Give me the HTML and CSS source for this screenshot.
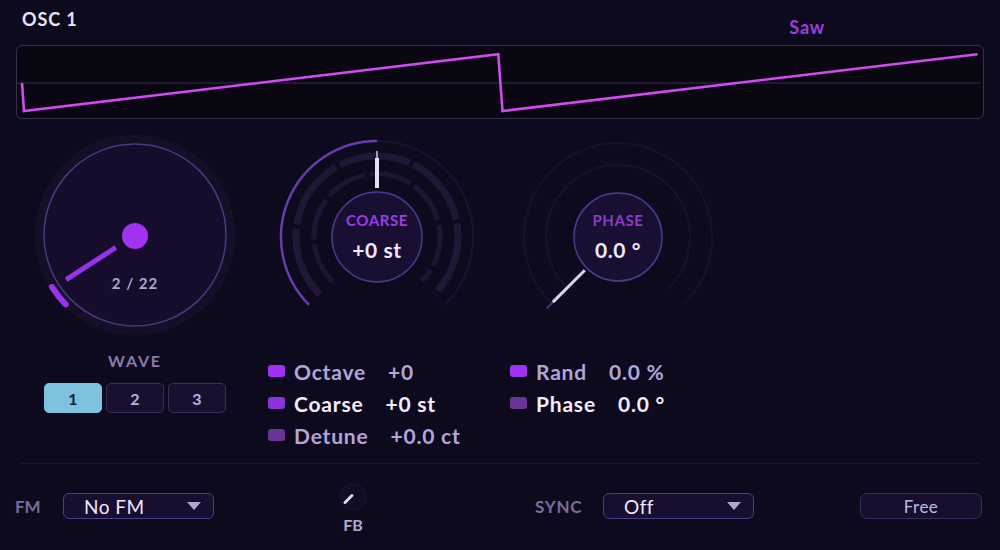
FILE: index.html
```html
<!DOCTYPE html>
<html lang="en">
<head>
<meta charset="utf-8">
<title>OSC 1</title>
<link rel="stylesheet" href="styles.css">
</head>
<body>
<div class="app">
  <header class="head">
    <span class="title">OSC 1</span>
    <span class="wave-name">Saw</span>
  </header>

  <div class="scope">
    <svg viewBox="0 0 966 72" preserveAspectRatio="none">
      <line x1="0" y1="37" x2="963" y2="37" class="midline"/>
      <polyline class="saw" points="5,37 7,65 481.3,8.3 485.5,65 960.5,8.3"/>
    </svg>
  </div>

  <section class="main">
    <div class="col col-wave">
      <div class="knob">
        <svg viewBox="0 0 200 204" width="200" height="204">
          <circle cx="100" cy="100" r="96" class="glow"/>
          <circle cx="100" cy="100" r="91" class="wave-face"/>
          <path d="M30.7 169.3 A98 98 0 0 1 16.9 151.9" class="wave-arc"/>
          <line x1="80.7" y1="112.5" x2="31.2" y2="144.7" class="wave-ptr"/>
          <circle cx="100" cy="101" r="13" class="wave-dot"/>
        </svg>
        <span class="wave-count">2 / 22</span>
      </div>
      <div class="wave-label">WAVE</div>
      <div class="wave-btns">
        <button class="wbtn active">1</button>
        <button class="wbtn">2</button>
        <button class="wbtn">3</button>
      </div>
    </div>

    <div class="col col-coarse">
      <div class="knob">
        <svg viewBox="0 0 200 204" width="200" height="204">
          <path d="M32.1 169.9 A96 96 0 0 1 100 6" class="arc-on"/>
          <path d="M100 6 A96 96 0 0 1 167.9 169.9" class="arc-off"/>
          <path d="M42.7 159.3 A81 81 0 1 1 157.3 159.3" class="ring-a"/>
          <path d="M55.5 146.5 A63 63 0 1 1 144.5 146.5" class="ring-b"/>
          <line x1="100" y1="16" x2="100" y2="23" class="ptr-thin"/>
          <line x1="100" y1="23" x2="100" y2="53" class="ptr-bar"/>
          <circle cx="100" cy="102" r="45" class="inner"/>
        </svg>
        <span class="k-name coarse">COARSE</span>
        <span class="k-val">+0 st</span>
      </div>
      <ul class="params">
        <li><span class="sq c1"></span><span class="lbl">Octave</span><span class="val">+0</span></li>
        <li class="hi"><span class="sq c2"></span><span class="lbl">Coarse</span><span class="val">+0 st</span></li>
        <li><span class="sq c3"></span><span class="lbl">Detune</span><span class="val">+0.0 ct</span></li>
      </ul>
    </div>

    <div class="col col-phase">
      <div class="knob">
        <svg viewBox="0 0 200 204" width="200" height="204">
          <path d="M33.5 168.5 A94 94 0 1 1 166.5 168.5" class="ring-faint"/>
          <path d="M49.1 152.9 A72 72 0 1 1 150.9 152.9" class="ring-faint"/>
          <line x1="34.9" y1="167.1" x2="28.6" y2="173.4" class="ph-tail"/>
          <line x1="66.8" y1="135.2" x2="34.9" y2="167.1" class="ph-ptr"/>
          <circle cx="100" cy="102" r="44" class="inner"/>
        </svg>
        <span class="k-name phase">PHASE</span>
        <span class="k-val">0.0 °</span>
      </div>
      <ul class="params">
        <li><span class="sq c1"></span><span class="lbl">Rand</span><span class="val">0.0 %</span></li>
        <li class="hi"><span class="sq c3"></span><span class="lbl">Phase</span><span class="val">0.0 °</span></li>
      </ul>
    </div>
  </section>

  <div class="sep"></div>

  <footer class="bottom">
    <span class="b-label fm">FM</span>
    <div class="dropdown fm-dd"><span>No FM</span><i class="tri"></i></div>
    <div class="fb">
      <svg viewBox="0 0 30 28" width="30" height="28">
        <circle cx="15.5" cy="14" r="13" class="fb-face"/>
        <line x1="7" y1="19.5" x2="14" y2="12.5" class="fb-ptr"/>
      </svg>
      <span class="fb-label">FB</span>
    </div>
    <span class="b-label sync">SYNC</span>
    <div class="dropdown sync-dd"><span>Off</span><i class="tri"></i></div>
    <button class="free">Free</button>
  </footer>
</div>
</body>
</html>
```

FILE: styles.css
```css
* { box-sizing: border-box; }

body {
  margin: 0;
  background: #0e0a1d;
  font-family: Lato, "Open Sans", "Noto Sans", sans-serif;
  color: #ebe3f8;
}

.app {
  width: 1000px;
  height: 550px;
  overflow: hidden;
}

/* header */
.head {
  display: flex;
  justify-content: space-between;
  height: 45px;
  padding-left: 22px;
}
.title {
  margin-top: 10px;
  font-size: 18px;
  line-height: 18px;
  font-weight: 700;
  letter-spacing: 0.9px;
  color: #ebe3f8;
}
.wave-name {
  margin-top: 18px;
  margin-right: 175px;
  font-size: 18px;
  line-height: 18px;
  font-weight: 700;
  letter-spacing: 0.8px;
  color: #9f3de3;
}

/* scope */
.scope {
  margin-left: 16px;
  width: 968px;
  height: 74px;
  border: 1px solid #36314a;
  border-radius: 6px;
  background: #0a0713;
}
.scope svg { display: block; width: 100%; height: 100%; }
.midline { stroke: #27223a; stroke-width: 1.5; }
.saw { fill: none; stroke: #d24bf0; stroke-width: 2.6; stroke-linejoin: miter; }

/* main */
.main {
  display: flex;
  height: 328px;
  margin-top: 16px;
  padding-left: 35px;
}
.col-wave { width: 200px; }
.col-coarse { width: 242px; margin-left: 33px; }
.col-coarse .knob { margin-left: 9px; }
.col-phase .knob { margin-left: 8px; }

.knob {
  position: relative;
  width: 200px;
  height: 204px;
}
.knob svg { display: block; }

.glow { fill: none; stroke: #140e27; stroke-width: 9; }
.wave-face { fill: #160d2d; stroke: #4a3a84; stroke-width: 1.5; }
.wave-arc { fill: none; stroke: #9a32ea; stroke-width: 6; stroke-linecap: round; }
.wave-ptr { stroke: #9a32ea; stroke-width: 5; }
.wave-dot { fill: #a232f2; }

.wave-count {
  position: absolute;
  left: 0;
  top: 141px;
  width: 100%;
  text-align: center;
  font-size: 15px;
  line-height: 15px;
  font-weight: 700;
  letter-spacing: 1px;
  color: #b2a5c8;
}

.arc-on { fill: none; stroke: #6a3ab0; stroke-width: 2.5; }
.arc-off { fill: none; stroke: #19132f; stroke-width: 2; }
.ring-a { fill: none; stroke: #1e1836; stroke-width: 7; stroke-dasharray: 72 4; }
.ring-b { fill: none; stroke: #1c1633; stroke-width: 5; stroke-dasharray: 42 5; }
.ptr-thin { stroke: #cfc6e4; stroke-width: 1.5; }
.ptr-bar { stroke: #e8e0f5; stroke-width: 4; }
.inner { fill: #190f33; stroke: #4a3a8a; stroke-width: 1.5; }
.ring-faint { fill: none; stroke: #17112b; stroke-width: 2; }
.ph-ptr { stroke: #ddd3ee; stroke-width: 3; }
.ph-tail { stroke: #4c3688; stroke-width: 2; }

.k-name {
  position: absolute;
  left: 0;
  top: 78px;
  width: 100%;
  text-align: center;
  font-size: 15px;
  line-height: 15px;
  font-weight: 700;
  letter-spacing: 0.6px;
}
.k-name.coarse { color: #9c3ee0; }
.k-name.phase { color: #8a3cc4; }
.k-val {
  position: absolute;
  left: 0;
  top: 105px;
  width: 100%;
  text-align: center;
  font-size: 21px;
  line-height: 20px;
  font-weight: 700;
  letter-spacing: 0.6px;
  color: #efe8fa;
}

/* wave selector */
.wave-label {
  margin-top: 12px;
  text-align: center;
  font-size: 16px;
  line-height: 20px;
  font-weight: 700;
  letter-spacing: 1.8px;
  color: #8a7aa8;
}
.wave-btns {
  display: flex;
  justify-content: center;
  gap: 4px;
  margin-top: 12px;
}
.wbtn {
  width: 58px;
  height: 30px;
  padding: 0;
  border: 1.5px solid #3a2c5c;
  border-radius: 5px;
  background: #190f2f;
  font-family: inherit;
  font-size: 16px;
  font-weight: 700;
  color: #bfb0e0;
}
.wbtn.active {
  background: #7dc3df;
  border-color: #7dc3df;
  color: #1a1d3a;
}

/* params */
.params {
  list-style: none;
  margin: 16px 0 0;
  padding: 0;
}
.params li {
  display: flex;
  align-items: center;
  height: 32px;
  font-size: 21px;
  font-weight: 700;
  letter-spacing: 0.8px;
  color: #b4a4dc;
}
.params li.hi { color: #f2ecff; }
.sq {
  width: 17px;
  height: 12px;
  border-radius: 3px;
  margin-right: 9px;
}
.sq.c1 { background: #a030f4; }
.sq.c2 { background: #8c34d8; }
.sq.c3 { background: #6a3496; }
.val { margin-left: 22px; }

/* separator */
.sep {
  height: 1px;
  margin: 0 20px;
  background: #1d1830;
}

/* bottom */
.bottom {
  display: flex;
  align-items: flex-start;
  padding-top: 29px;
}
.b-label {
  font-size: 17px;
  line-height: 27px;
  font-weight: 700;
  color: #7b6c9a;
}
.b-label.fm { width: 48px; margin-left: 15px; }
.b-label.sync { width: 68px; margin-left: 167px; letter-spacing: 0.7px; }

.dropdown {
  display: flex;
  align-items: center;
  justify-content: space-between;
  width: 151px;
  height: 26px;
  padding: 0 12px 0 20px;
  border: 1.5px solid #4c3c8a;
  border-radius: 6px;
  background: #170e30;
  font-size: 19px;
  color: #efe8fa;
  letter-spacing: 0.5px;
}
.tri {
  width: 0;
  height: 0;
  border-left: 7px solid transparent;
  border-right: 7px solid transparent;
  border-top: 8px solid #b3a6d3;
}

.fb {
  display: flex;
  flex-direction: column;
  align-items: center;
  width: 30px;
  margin-left: 124px;
  margin-top: -10px;
}
.fb svg { display: block; }
.fb-face { fill: #130d24; stroke: #1a1430; stroke-width: 1; }
.fb-ptr { stroke: #ddd4ee; stroke-width: 3; stroke-linecap: round; }
.fb-label {
  margin-top: 6px;
  font-size: 16px;
  line-height: 16px;
  font-weight: 700;
  color: #b2a6d6;
}

.free {
  width: 122px;
  height: 26px;
  margin-left: 106px;
  padding: 0;
  border: 1.5px solid #3a2c62;
  border-radius: 7px;
  background: #180f2e;
  font-family: inherit;
  font-size: 17px;
  letter-spacing: 0.5px;
  color: #c4b6e2;
}
```
